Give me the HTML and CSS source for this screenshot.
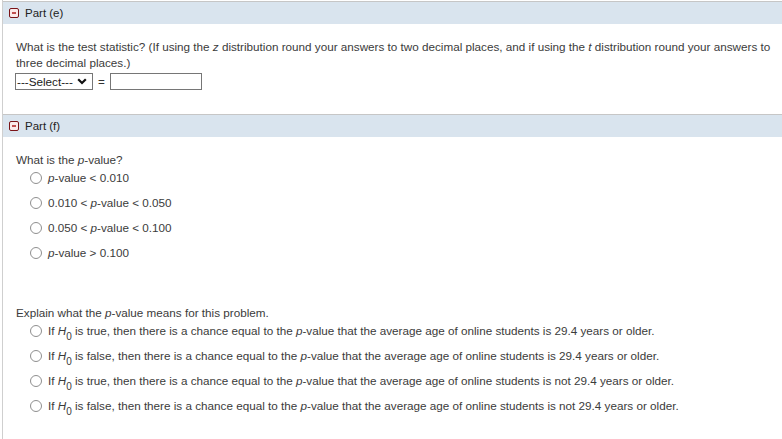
FILE: index.html
```html
<!DOCTYPE html>
<html>
<head>
<meta charset="utf-8">
<link rel="stylesheet" href="styles.css">
</head>
<body>
<div class="page">
  <div class="part-head">
    <span class="toggle"></span><span class="part-title">Part (e)</span>
  </div>
  <div class="part-body part-e">
    <p class="q">What is the test statistic? (If using the <i>z</i> distribution round your answers to two decimal places, and if using the <i>t</i> distribution round your answers to three decimal places.)</p>
    <div class="answer-row">
      <span class="select">---Select---<svg class="chev" width="10" height="7" viewBox="0 0 10 7"><path d="M1.2 1.2 L5 5 L8.8 1.2" fill="none" stroke="#111" stroke-width="2.2"/></svg></span>
      <span class="eq">=</span>
      <span class="input"></span>
    </div>
  </div>
  <div class="part-head">
    <span class="toggle"></span><span class="part-title">Part (f)</span>
  </div>
  <div class="part-body part-f">
    <p class="q">What is the <i>p</i>-value?</p>
    <ul class="opts">
      <li><span class="radio"></span><span><i>p</i>-value &lt; 0.010</span></li>
      <li><span class="radio"></span><span>0.010 &lt; <i>p</i>-value &lt; 0.050</span></li>
      <li><span class="radio"></span><span>0.050 &lt; <i>p</i>-value &lt; 0.100</span></li>
      <li><span class="radio"></span><span><i>p</i>-value &gt; 0.100</span></li>
    </ul>
    <p class="q q2">Explain what the <i>p</i>-value means for this problem.</p>
    <ul class="opts">
      <li><span class="radio"></span><span>If <i>H</i><sub>0</sub> is true, then there is a chance equal to the <i>p</i>-value that the average age of online students is 29.4 years or older.</span></li>
      <li><span class="radio"></span><span>If <i>H</i><sub>0</sub> is false, then there is a chance equal to the <i>p</i>-value that the average age of online students is 29.4 years or older.</span></li>
      <li><span class="radio"></span><span>If <i>H</i><sub>0</sub> is true, then there is a chance equal to the <i>p</i>-value that the average age of online students is not 29.4 years or older.</span></li>
      <li><span class="radio"></span><span>If <i>H</i><sub>0</sub> is false, then there is a chance equal to the <i>p</i>-value that the average age of online students is not 29.4 years or older.</span></li>
    </ul>
  </div>
</div>
</body>
</html>
```
FILE: styles.css
```css
html, body {
  margin: 0;
  padding: 0;
  background: #fff;
}
body {
  font-family: "Liberation Sans", Arial, sans-serif;
  font-size: 11.7px;
  color: #3b3b3b;
}
.page {
  margin-left: 2px;
  border-left: 1px solid #cfcfcf;
  min-height: 439px;
  padding-top: 1px;
}
.part-head {
  border-top: 1px solid #c6c6c6;
  background: #d9e4ee;
  height: 22px;
  display: flex;
  align-items: center;
  padding-left: 6px;
}
.toggle {
  width: 8px;
  height: 8px;
  border: 1px solid #7a1418;
  border-radius: 2px;
  background: #fbeaea;
  position: relative;
  margin-right: 6px;
}
.toggle::after {
  content: "";
  position: absolute;
  left: 2px;
  top: 3px;
  width: 4px;
  height: 2px;
  background: #c05050;
}
.part-title {
  color: #222;
  font-size: 11.5px;
}
.part-body {
  padding-left: 13px;
}
.part-e {
  padding-top: 15px;
  height: 75px;
}
.q {
  margin: 0;
  line-height: 16px;
}
.answer-row {
  display: flex;
  align-items: center;
  margin-top: 2px;
  margin-left: -1px;
  height: 17px;
}
.select {
  display: inline-flex;
  align-items: center;
  box-sizing: border-box;
  width: 78px;
  height: 17px;
  border: 1px solid #767676;
  padding: 0 1px 0 1px;
  font-size: 11.7px;
  color: #222;
}
.chev {
  margin-left: 4px;
}
.eq {
  margin: 0 5px 0 5px;
  color: #333;
}
.input {
  display: inline-block;
  box-sizing: border-box;
  width: 92px;
  height: 17px;
  border: 1px solid #767676;
}
.part-f {
  padding-top: 15px;
}
.opts {
  list-style: none;
  margin: -3px 0 0 0;
  padding: 0 0 0 14px;
}
.opts li {
  display: flex;
  align-items: center;
  height: 25px;
}
.radio {
  width: 12px;
  height: 12px;
  border: 1px solid #8f8f8f;
  border-radius: 50%;
  box-sizing: border-box;
  margin-right: 6px;
  background: #fff;
  flex: none;
}
.q2 {
  margin-top: 40px;
}
sub {
  font-size: 10px;
  vertical-align: -5px;
  line-height: 0;
}
i {
  font-style: italic;
}
```
